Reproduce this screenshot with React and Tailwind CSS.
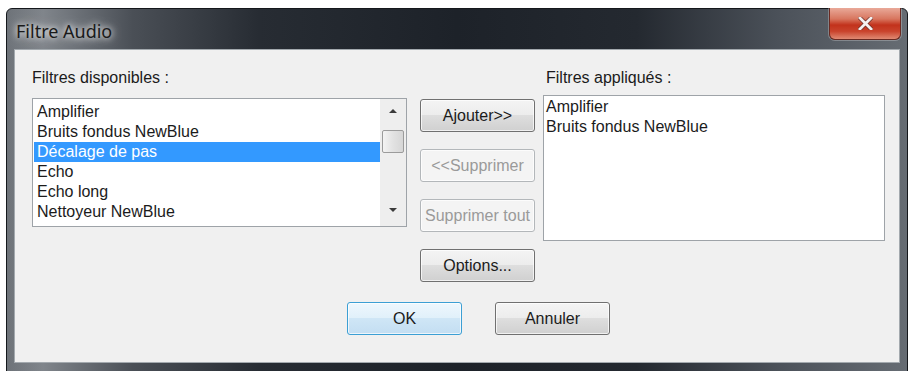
import React from 'react';

// Win7-style push button
const Btn = ({ children, disabled = false, isDefault = false, className = '' }) => {
  let look =
    'border-[#707070] bg-[linear-gradient(#f4f4f4_0%,#ececec_50%,#dedede_50%,#d0d0d0_100%)] text-[#1b1b1b]';
  if (disabled) look = 'border-[#b3b7ba] bg-[#f4f4f4] text-[#9a9a9a]';
  if (isDefault)
    look =
      'border-[#3c9fd4] bg-[linear-gradient(#eef7fd_0%,#e0f0fa_50%,#cfe6f6_50%,#c3def2_100%)] text-[#1b1b1b] shadow-[0_0_3px_#7fd0f5]';
  return (
    <div
      className={`flex h-[33px] w-[115px] items-center justify-center whitespace-nowrap rounded-[3px] border text-[16px] shadow-[inset_0_0_0_1px_rgba(255,255,255,0.7)] ${look} ${className}`}
    >
      {children}
    </div>
  );
};

const available = [
  'Amplifier',
  'Bruits fondus NewBlue',
  'Décalage de pas',
  'Echo',
  'Echo long',
  'Nettoyeur NewBlue',
];

const applied = ['Amplifier', 'Bruits fondus NewBlue'];

export default function App() {
  return (
    <div className="h-[371px] w-[912px] overflow-hidden bg-white font-['Liberation_Sans',Arial,sans-serif]">
      <div className="ml-[6px] mt-[8px] flex h-[364px] w-[902px] flex-col rounded-t-[6px] border border-[#15181c] bg-[linear-gradient(90deg,#6e7379_0%,#80858b_4%,#4a4f56_14%,#272c33_28%,#1d2229_50%,#242930_70%,#4c525a_86%,#666c73_100%)]">
        {/* title bar */}
        <div className="flex h-[40px] items-start justify-between">
          <div className="pl-[9px] pt-[10px] font-['Noto_Sans',sans-serif] text-[18px] leading-[24px] text-[#1a1a1a] [text-shadow:0_0_6px_#ffffff,0_0_12px_rgba(255,255,255,0.8)]">
            Filtre Audio
          </div>
          <div className="-mt-[1px] mr-[6px] flex h-[32px] w-[72px] items-center justify-center rounded-b-[6px] border border-t-0 border-[#6a2a22] bg-[linear-gradient(#e9a999_0%,#d8765f_35%,#c2321c_55%,#c9432c_75%,#e08a73_100%)] shadow-[0_0_0_1px_rgba(255,255,255,0.25)]">
            <svg width="15" height="13" viewBox="0 0 16 14">
              <path d="M2 1 L14 13 M14 1 L2 13" stroke="#6b2a22" strokeWidth="4.5" strokeLinecap="square" />
              <path d="M2 1 L14 13 M14 1 L2 13" stroke="#f4f0ef" strokeWidth="3" strokeLinecap="square" />
            </svg>
          </div>
        </div>

        {/* client area */}
        <div className="mx-[7px] mb-[8px] flex-1 border border-[#a3a9ae] bg-[#f0f0f0] pl-[17px] pt-[18px] text-[16px] text-[#1b1b1b]">
          <div className="flex items-start">
            {/* available filters */}
            <div className="w-[375px]">
              <div className="h-[20px] leading-[20px]">Filtres disponibles :</div>
              <div className="mt-[10px] flex h-[129px] border border-[#9ea3a8] bg-white">
                <div className="flex-1 pl-[1px] pt-[3px]">
                  {available.map((name, i) => (
                    <div
                      key={name}
                      className={`h-[20px] pl-[3px] leading-[20px] ${i === 2 ? 'bg-[#3399ff] text-white' : ''}`}
                    >
                      {name}
                    </div>
                  ))}
                </div>
                {/* scrollbar */}
                <div className="flex w-[26px] flex-col items-center bg-[#eeeeee] pb-[14px] pt-[10px]">
                  <div className="h-0 w-0 border-x-[4px] border-b-[4px] border-x-transparent border-b-[#3a3a3a]" />
                  <div className="mt-[17px] h-[23px] w-[22px] rounded-[2px] border border-[#9b9b9b] bg-[linear-gradient(90deg,#f3f3f3,#e2e2e2_50%,#d6d6d6)]" />
                  <div className="flex-1" />
                  <div className="h-0 w-0 border-x-[4px] border-t-[4px] border-x-transparent border-t-[#3a3a3a]" />
                </div>
              </div>
            </div>

            {/* action buttons */}
            <div className="ml-[13px] flex flex-col gap-[17px] pt-[31px]">
              <Btn>Ajouter&gt;&gt;</Btn>
              <Btn disabled>&lt;&lt;Supprimer</Btn>
              <Btn disabled>Supprimer tout</Btn>
              <Btn>Options...</Btn>
            </div>

            {/* applied filters */}
            <div className="ml-[8px] w-[342px]">
              <div className="h-[20px] pl-[3px] leading-[20px]">Filtres appliqués :</div>
              <div className="mt-[7px] h-[146px] border border-[#9ea3a8] bg-white pl-[2px] pt-[1px]">
                {applied.map((name) => (
                  <div key={name} className="h-[20px] leading-[20px]">
                    {name}
                  </div>
                ))}
              </div>
            </div>
          </div>

          {/* dialog buttons */}
          <div className="mt-[20px] flex gap-[33px] pl-[315px]">
            <Btn isDefault>OK</Btn>
            <Btn>Annuler</Btn>
          </div>
        </div>
      </div>
    </div>
  );
}
